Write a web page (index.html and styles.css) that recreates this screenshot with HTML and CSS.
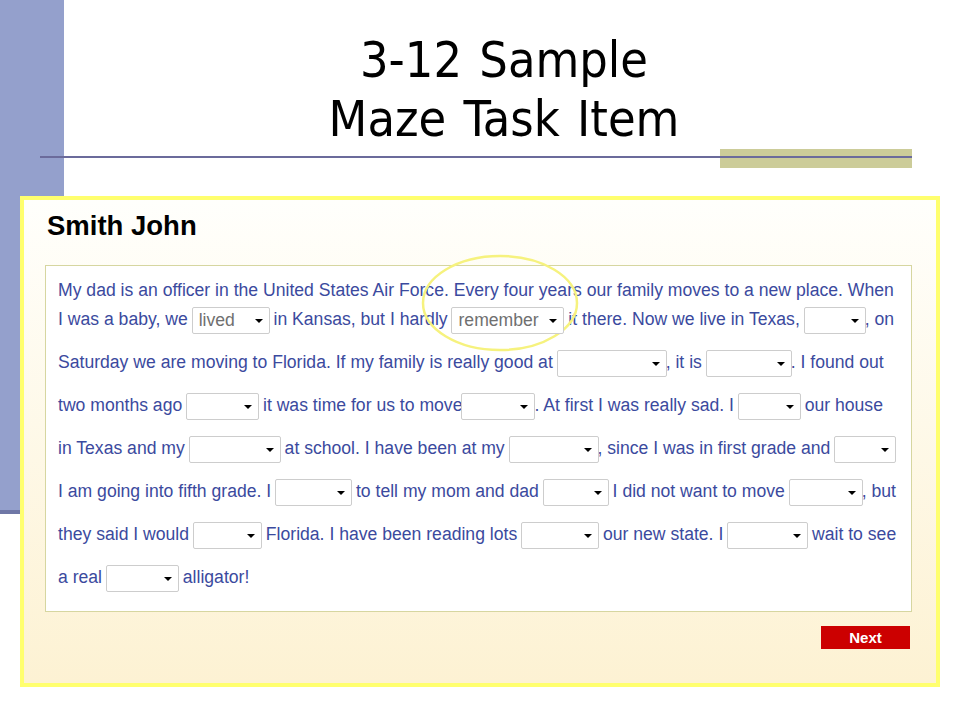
FILE: index.html
```html
<!DOCTYPE html>
<html lang="en">
<head>
    <meta charset="UTF-8">
    <meta name="viewport" content="width=device-width, initial-scale=1.0">
    <title>3-12 Sample Maze Task Item</title>
    <link rel="stylesheet" href="styles.css">
</head>
<body>
    <header class="slide-title">
        <h1>3-12 Sample<br>Maze Task Item</h1>
    </header>
    <div class="title-rule"></div>

    <div class="task-panel">
        <h2>Smith John</h2>

        <div class="passage">
            <svg class="highlight" width="160" height="100" viewBox="0 0 160 100">
                <ellipse cx="80" cy="50" rx="77" ry="47" />
            </svg>

            <div class="line short">My dad is an officer in the United States Air Force. Every four years our family moves to a new place. When</div>
            <div class="line short">I was a baby, we <span class="choice" style="width:78px">lived</span> in Kansas, but I hardly <span class="choice" style="width:113px">remember</span> it there. Now we live in Texas, <span class="choice" style="width:62px"></span>, on</div>
            <div class="line gap">Saturday we are moving to Florida. If my family is really good at <span class="choice" style="width:110px"></span>, it is <span class="choice" style="width:86px"></span>. I found out</div>
            <div class="line">two months ago <span class="choice" style="width:73px"></span> it was time for us to move<span class="choice" style="width:74px"></span>. At first I was really sad. I <span class="choice" style="width:63px"></span> our house</div>
            <div class="line">in Texas and my <span class="choice" style="width:92px"></span> at school. I have been at my <span class="choice" style="width:90px"></span>, since I was in first grade and <span class="choice" style="width:62px"></span></div>
            <div class="line">I am going into fifth grade. I <span class="choice" style="width:77px"></span> to tell my mom and dad <span class="choice" style="width:66px"></span> I did not want to move <span class="choice" style="width:74px"></span>, but</div>
            <div class="line">they said I would <span class="choice" style="width:69px"></span> Florida. I have been reading lots <span class="choice" style="width:78px"></span> our new state. I <span class="choice" style="width:81px"></span> wait to see</div>
            <div class="line">a real <span class="choice" style="width:73px"></span> alligator!</div>
        </div>

        <div class="actions">
            <button class="next-btn">Next</button>
        </div>
    </div>
</body>
</html>
```

FILE: styles.css
```css
/* Slide frame */
body {
    margin: 0;
    min-height: 720px;
    font-family: "Liberation Sans", Arial, sans-serif;
    background:
        linear-gradient(#6f77a6, #6f77a6) 0 510px / 20px 4px no-repeat,
        linear-gradient(#94a0cc, #94a0cc) 0 0 / 64px 512px no-repeat,
        #fff;
}

.slide-title {
    padding: 31px 16px 0 64px;
    text-align: center;
}

.slide-title h1 {
    margin: 0;
    font-family: "DejaVu Sans Condensed", "DejaVu Sans", sans-serif;
    font-stretch: condensed;
    font-weight: normal;
    font-size: 50px;
    line-height: 59px;
    word-spacing: 3px;
    color: #000;
}

.title-rule {
    margin-left: 40px;
    width: 872px;
    height: 19px;
    background:
        linear-gradient(#6b6b9b, #6b6b9b) 0 7px / 100% 2px no-repeat,
        linear-gradient(#cccc99, #cccc99) right 0 top 0 / 192px 100% no-repeat;
}

/* Task window */
.task-panel {
    box-sizing: border-box;
    width: 920px;
    height: 491px;
    margin: 28px 0 0 20px;
    padding: 11px 24px 0 21px;
    border: 4px solid #ffff6e;
    background: linear-gradient(#fffffc, #fdf2d3);
}

.task-panel h2 {
    margin: 0 0 0 2px;
    font-size: 27.5px;
    line-height: 30px;
    font-weight: bold;
    color: #000;
}

.passage {
    position: relative;
    margin-top: 24px;
    padding: 10px 12px 12px;
    border: 1px solid #d6d6a0;
    background: #fff;
    color: #3b4a9e;
    font-size: 17.6px;
}

.line {
    height: 43px;
    line-height: 43px;
    white-space: nowrap;
}

.line.short {
    height: 28px;
    line-height: 28px;
}

.line.short + .line.short {
    margin-top: 1px;
}

.line.gap {
    margin-top: 8px;
}

/* Drop-down answer boxes */
.choice {
    position: relative;
    display: inline-block;
    box-sizing: border-box;
    height: 27px;
    margin: 0 -1px;
    padding-left: 6px;
    vertical-align: middle;
    border: 1px solid #cdcdcd;
    border-radius: 2px;
    background: #fff;
    color: #707070;
    line-height: 25px;
    text-align: left;
}

.choice::after {
    content: "";
    position: absolute;
    right: 6px;
    top: 11px;
    border-left: 4px solid transparent;
    border-right: 4px solid transparent;
    border-top: 4px solid #000;
}

.highlight {
    position: absolute;
    left: 374px;
    top: -13px;
    pointer-events: none;
}

.highlight ellipse {
    fill: none;
    stroke: #f6f27e;
    stroke-width: 2.5;
}

.actions {
    display: flex;
    justify-content: flex-end;
    margin-top: 14px;
    padding-right: 2px;
}

.next-btn {
    width: 89px;
    height: 23px;
    padding: 0;
    border: none;
    background-color: #cc0000;
    color: #fff;
    font-family: "Liberation Sans", Arial, sans-serif;
    font-size: 15px;
    font-weight: bold;
    cursor: pointer;
}
```
